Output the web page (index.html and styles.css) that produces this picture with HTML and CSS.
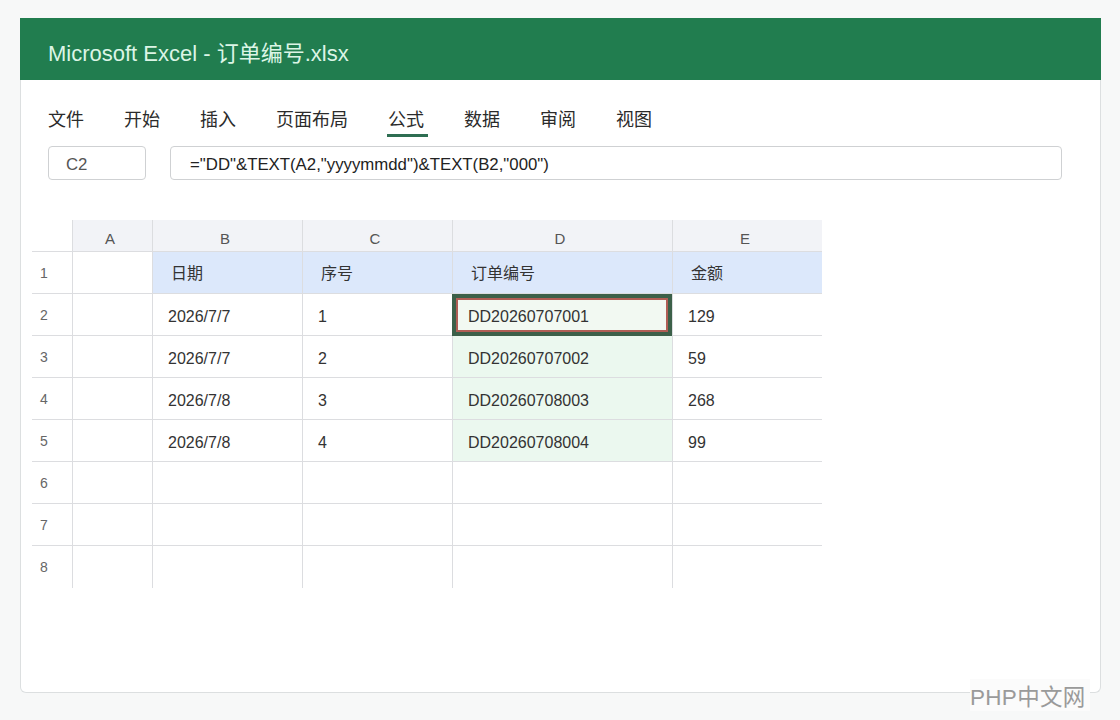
FILE: index.html
```html
<!DOCTYPE html>
<html lang="zh-CN">
<head>
  <meta charset="UTF-8" />
  <meta name="viewport" content="width=device-width, initial-scale=1.0"/>
  <title>Microsoft Excel - 订单编号.xlsx</title>
  <link rel="stylesheet" href="styles.css">
</head>
<body>
  <div class="window">
    <div class="titlebar">Microsoft Excel - 订单编号.xlsx</div>

    <!-- Ribbon tabs -->
    <nav class="tabs">
      <span>文件</span>
      <span>开始</span>
      <span>插入</span>
      <span>页面布局</span>
      <span class="active">公式</span>
      <span>数据</span>
      <span>审阅</span>
      <span>视图</span>
    </nav>

    <!-- Formula bar -->
    <div class="formula-row">
      <div class="namebox">C2</div>
      <div class="formula">="DD"&amp;TEXT(A2,"yyyymmdd")&amp;TEXT(B2,"000")</div>
    </div>

    <!-- Sheet -->
    <div class="sheet">
      <div class="corner"></div>
      <div class="colhead">A</div>
      <div class="colhead">B</div>
      <div class="colhead">C</div>
      <div class="colhead">D</div>
      <div class="colhead">E</div>

      <div class="rowhead">1</div>
      <div class="cell"></div>
      <div class="cell title">日期</div>
      <div class="cell title">序号</div>
      <div class="cell title">订单编号</div>
      <div class="cell title">金额</div>

      <div class="rowhead">2</div>
      <div class="cell"></div>
      <div class="cell">2026/7/7</div>
      <div class="cell">1</div>
      <div class="cell result selected">DD20260707001</div>
      <div class="cell">129</div>

      <div class="rowhead">3</div>
      <div class="cell"></div>
      <div class="cell">2026/7/7</div>
      <div class="cell">2</div>
      <div class="cell result">DD20260707002</div>
      <div class="cell">59</div>

      <div class="rowhead">4</div>
      <div class="cell"></div>
      <div class="cell">2026/7/8</div>
      <div class="cell">3</div>
      <div class="cell result">DD20260708003</div>
      <div class="cell">268</div>

      <div class="rowhead">5</div>
      <div class="cell"></div>
      <div class="cell">2026/7/8</div>
      <div class="cell">4</div>
      <div class="cell result">DD20260708004</div>
      <div class="cell">99</div>

      <div class="rowhead">6</div>
      <div class="cell"></div><div class="cell"></div><div class="cell"></div><div class="cell"></div><div class="cell"></div>

      <div class="rowhead">7</div>
      <div class="cell"></div><div class="cell"></div><div class="cell"></div><div class="cell"></div><div class="cell"></div>

      <div class="rowhead last">8</div>
      <div class="cell last"></div><div class="cell last"></div><div class="cell last"></div><div class="cell last"></div><div class="cell last"></div>
    </div>
  </div>

  <div class="watermark">PHP中文网</div>
</body>
</html>
```

FILE: styles.css
```css
body {
  margin: 0;
  padding: 18px 19px 0 20px;
  background: #f7f8f8;
  font-family: "Liberation Sans", "Noto Sans CJK SC", sans-serif;
  color: #333;
}

.window {
  height: 675px;
  box-sizing: border-box;
  background: #fff;
  border: 1px solid #dcdfe0;
  border-top: none;
  border-radius: 0 0 6px 6px;
}

.titlebar {
  height: 52px;
  margin: 0 -1px;
  padding: 10px 0 0 28px;
  background: #217d4f;
  color: #dcf5e6;
  font-size: 22px;
  line-height: 52px;
}

.tabs {
  display: flex;
  gap: 40px;
  margin-top: 29px;
  padding-left: 27px;
  font-size: 18px;
  line-height: 23px;
  color: #2b2b2b;
}

.tabs span {
  padding-bottom: 2px;
}

.tabs .active {
  padding: 0 4px 2px 1px;
  margin: 0 -4px 0 -1px;
  border-bottom: 3px solid #2e6e52;
}

.formula-row {
  display: flex;
  gap: 24px;
  margin: 9px 38px 0 27px;
}

.namebox,
.formula {
  height: 34px;
  box-sizing: border-box;
  border: 1px solid #cfd1d3;
  border-radius: 4px;
  padding-top: 3px;
  font-size: 16.8px;
  line-height: 30px;
}

.namebox {
  width: 98px;
  padding-left: 17px;
  color: #555;
}

.formula {
  flex: 1;
  padding-left: 19px;
  color: #222;
}

.sheet {
  display: grid;
  grid-template-columns: 40px 80px 150px 150px 220px 150px;
  grid-template-rows: 32px repeat(8, 42px);
  width: max-content;
  margin: 40px 0 0 11px;
  font-size: 16px;
}

.corner {
  border-bottom: 1px solid #dcdde0;
}

.colhead {
  background: #f2f3f7;
  border-left: 1px solid #dcdde0;
  border-bottom: 1px solid #dcdde0;
  padding-right: 5px;
  text-align: center;
  font-size: 15px;
  line-height: 37px;
  color: #555;
}

.rowhead {
  border-bottom: 1px solid #dcdde0;
  padding-left: 8px;
  font-size: 14px;
  line-height: 43px;
  color: #666;
}

.cell {
  border-left: 1px solid #dcdde0;
  border-bottom: 1px solid #dcdde0;
  padding-left: 15px;
  line-height: 46px;
  color: #333;
}

.cell.title {
  background: #dce8fb;
  line-height: 44px;
  padding-left: 18px;
}

.cell.result {
  background: #ebf8ef;
}

.cell.selected {
  box-sizing: border-box;
  border: 4px solid #3c6049;
  padding-left: 12px;
  line-height: 38px;
  background: #f2f9f2;
  box-shadow: inset 0 0 0 2px #b05e55;
}

.last {
  border-bottom: none;
}

.watermark {
  position: absolute;
  left: 970px;
  top: 679px;
  padding-right: 4px;
  font-size: 22.5px;
  color: #9a9a9a;
  background: #fbfbfb;
  letter-spacing: 0.3px;
}
```
